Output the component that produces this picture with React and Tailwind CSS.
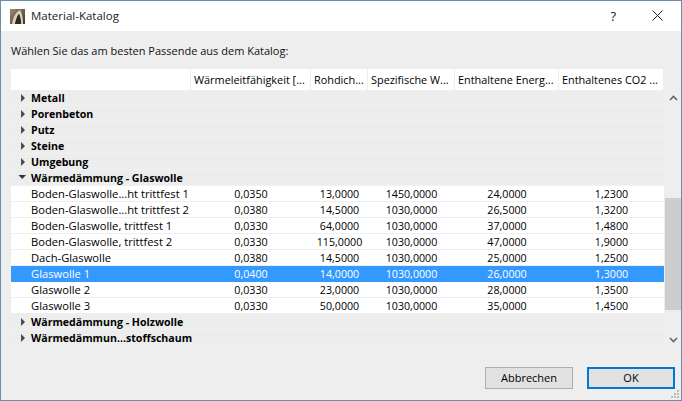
import React from 'react';

const headers = [
  { label: 'Wärmeleitfähigkeit [...', width: 'w-[119px]' },
  { label: 'Rohdich...', width: 'w-[56px]' },
  { label: 'Spezifische W...', width: 'w-[86px]' },
  { label: 'Enthaltene Energ...', width: 'w-[103px]' },
  { label: 'Enthaltenes CO2 ...', width: 'w-[104px]' },
];

const widths = ['w-[120px]', 'w-[57px]', 'w-[87px]', 'w-[104px]', 'w-[105px]'];

const items = [
  ['Boden-Glaswolle...ht trittfest 1', '0,0350', '13,0000', '1450,0000', '24,0000', '1,2300'],
  ['Boden-Glaswolle...ht trittfest 2', '0,0380', '14,5000', '1030,0000', '26,5000', '1,3200'],
  ['Boden-Glaswolle, trittfest 1', '0,0330', '64,0000', '1030,0000', '37,0000', '1,4800'],
  ['Boden-Glaswolle, trittfest 2', '0,0330', '115,0000', '1030,0000', '47,0000', '1,9000'],
  ['Dach-Glaswolle', '0,0380', '14,5000', '1030,0000', '25,0000', '1,2500'],
  ['Glaswolle 1', '0,0400', '14,0000', '1030,0000', '26,0000', '1,3000'],
  ['Glaswolle 2', '0,0330', '23,0000', '1030,0000', '28,0000', '1,3500'],
  ['Glaswolle 3', '0,0330', '50,0000', '1030,0000', '35,0000', '1,4500'],
];

function Arrow({ open }) {
  return (
    <svg width="7" height="8" viewBox="0 0 7 8" className="mr-[4px] shrink-0 overflow-visible">
      {open ? <path d="M-1.5 1H6L2.25 5z" fill="#333" /> : <path d="M1 0l4 4-4 4z" fill="#4a4a4a" />}
    </svg>
  );
}

function Group({ label, open }) {
  return (
    <div className="flex h-4 items-center border-b border-[#f2f2f2] bg-[#ededed] pl-[9px] text-[10.6px] font-bold text-black">
      <Arrow open={open} />
      <span>{label}</span>
    </div>
  );
}

function Row({ cells, selected }) {
  return (
    <div className={`flex h-4 items-center border-b ${selected ? 'border-[#3399ff] bg-[#3399ff] text-white' : 'border-[#eeeeee] bg-white text-black'}`}>
      <span className="w-[180px] pl-5 text-[11.2px] whitespace-nowrap">{cells[0]}</span>
      {cells.slice(1).map((value, i) => (
        <span key={i} className={`text-center text-[10.7px] ${widths[i]}`}>{value}</span>
      ))}
    </div>
  );
}

export default function App() {
  return (
    <div className="flex h-[401px] w-[682px] flex-col overflow-hidden border border-[#6b8cab] bg-[#eeeeee] font-['Open_Sans','Noto_Sans',sans-serif] text-[11px] leading-4 text-black">
      <div className="flex h-[30px] shrink-0 items-center bg-white pl-[9px]">
        <svg width="15" height="15" viewBox="0 0 15 15" className="mr-[6px]">
          <defs>
            <linearGradient id="bg" x1="0" y1="0" x2="1" y2="1">
              <stop offset="0" stopColor="#9a8d72" />
              <stop offset="1" stopColor="#3d3426" />
            </linearGradient>
          </defs>
          <rect width="15" height="15" fill="url(#bg)" />
          <path d="M2 15C3 8 6 3 10 1c2 3 3 8 3 14h-2c0-4-1-8-2-10C7 7 6 11 5 15z" fill="#d8d0bc" />
          <path d="M5 15C6 11 7 7 9 5c1 2 2 6 2 10z" fill="#2e281d" />
        </svg>
        <span className="text-[11.5px] text-[#222]">Material-Katalog</span>
        <div className="ml-auto flex items-center">
          <span className="mr-[36px] -mt-px text-[13px] text-[#222]">?</span>
          <svg width="11" height="11" viewBox="0 0 11 11" className="mr-[18px] -mt-px">
            <path d="M.5.5l10 10M10.5.5l-10 10" stroke="#222" fill="none" />
          </svg>
        </div>
      </div>

      <div className="relative flex flex-1 flex-col pl-[10px]">
        <p className="mt-[12px] h-[16px] text-[11px] text-[#111]">Wählen Sie das am besten Passende aus dem Katalog:</p>

        <div className="mt-[10px] flex">
          <div className="w-[653px]">
            <div className="flex h-[21px] gap-px">
              <div className="h-full w-[179px] bg-white" />
              {headers.map((h) => (
                <div key={h.label} className={`flex h-full items-center overflow-hidden whitespace-nowrap bg-white pt-px pl-[3px] text-[10.9px] ${h.width}`}>
                  {h.label}
                </div>
              ))}
            </div>
            <Group label="Metall" />
            <Group label="Porenbeton" />
            <Group label="Putz" />
            <Group label="Steine" />
            <Group label="Umgebung" />
            <Group label="Wärmedämmung - Glaswolle" open />
            {items.map((cells, i) => (
              <Row key={cells[0]} cells={cells} selected={i === 5} />
            ))}
            <Group label="Wärmedämmung - Holzwolle" />
            <Group label="Wärmedämmun...stoffschaum" />
          </div>

          <div className="ml-px flex w-[16px] flex-col items-center pt-[21px]">
            <div className="flex h-[16px] items-center justify-center">
              <svg width="9" height="6" viewBox="0 0 9 6"><path d="M1 5l3.5-3.5L8 5" stroke="#666" strokeWidth="1.6" fill="none" /></svg>
            </div>
            <div className="mt-[92px] h-[112px] w-full bg-[#cdcdcd]" />
            <div className="mt-auto flex h-[16px] items-center justify-center pt-[4px]">
              <svg width="9" height="6" viewBox="0 0 9 6"><path d="M1 1l3.5 3.5L8 1" stroke="#666" strokeWidth="1.6" fill="none" /></svg>
            </div>
          </div>
        </div>

        <div className="mt-[21px] flex justify-end pr-[6px]">
          <button className="mr-[14px] h-[22px] w-[88px] border border-[#adadad] bg-[#e1e1e1] text-[11px] text-black">Abbrechen</button>
          <button className="h-[22px] w-[88px] border-2 border-[#0078d7] bg-[#e1e1e1] text-[11px] text-black">OK</button>
        </div>

        <svg width="8" height="8" viewBox="0 0 8 8" className="absolute right-[2px] bottom-[2px]">
          <path d="M6 0h2v2H6zM3 3h2v2H3zM6 3h2v2H6zM0 6h2v2H0zM3 6h2v2H3zM6 6h2v2H6z" fill="#bdbdbd" />
        </svg>
      </div>
    </div>
  );
}
